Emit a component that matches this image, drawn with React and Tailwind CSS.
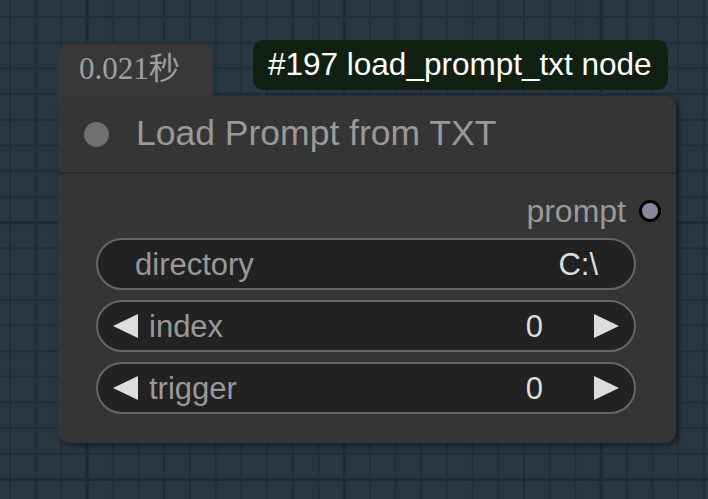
import React from 'react';

const STEP = 25.7;

// canvas grid behind the node
const Grid = () => {
  const lines = [];
  for (let k = -1; k < 30; k++) {
    const x = 10 + STEP * k;
    const major = (k - 3) % 10 === 0;
    lines.push(
      <rect key={'v' + k} x={x - (major ? 1.5 : 1)} y={0} width={major ? 3 : 2} height={499} fill={major ? '#1f2a32' : '#222e37'} />
    );
  }
  for (let k = -1; k < 22; k++) {
    const y = 17 + STEP * k;
    const major = (k - 8) % 10 === 0;
    lines.push(
      <rect key={'h' + k} x={0} y={y - (major ? 1.5 : 1)} width={708} height={major ? 3 : 2} fill={major ? '#1f2a32' : '#222e37'} />
    );
  }
  return (
    <svg className="absolute inset-0" width="708" height="499">
      <rect width="708" height="499" fill="#293741" />
      {lines}
    </svg>
  );
};

const ArrowLeft = () => (
  <svg width="25" height="24" viewBox="0 0 25 24" className="shrink-0">
    <polygon points="25,0 25,24 0,12" fill="#dddddd" />
  </svg>
);

const ArrowRight = () => (
  <svg width="25" height="24" viewBox="0 0 25 24" className="shrink-0">
    <polygon points="0,0 0,24 25,12" fill="#dddddd" />
  </svg>
);

const NumberWidget = ({ label, value }) => (
  <div className="h-[52px] w-[540px] rounded-full border-2 border-[#666666] bg-[#222222] flex items-center pl-[15px] pr-[15px]">
    <ArrowLeft />
    <span className="ml-[11px] text-[31px] text-[#999999] leading-none">{label}</span>
    <span className="ml-auto text-[31px] text-[#dddddd] leading-none">{value}</span>
    <span className="ml-[51px]"><ArrowRight /></span>
  </div>
);

export default function App() {
  return (
    <div className="relative w-[708px] h-[499px] overflow-hidden" style={{ fontFamily: '"Liberation Sans", Arial, sans-serif' }}>
      <Grid />

      {/* execution time badge */}
      <div className="absolute left-[58px] top-[44px] w-[154px] h-[60px] rounded-t-[10px] bg-[#383838] pl-[21px] pt-[9px]">
        <span className="text-[31px] text-[#a0a0a0] leading-none" style={{ fontFamily: '"Liberation Serif", "Noto Sans CJK SC", serif' }}>0.021秒</span>
      </div>

      {/* node id badge */}
      <div className="absolute left-[253px] top-[40px] w-[415px] h-[50px] rounded-[10px] bg-[#102112] flex items-center pl-[15px]">
        <span className="text-[31.5px] text-white leading-none whitespace-nowrap">#197 load_prompt_txt node</span>
      </div>

      {/* node */}
      <div className="absolute left-[58px] top-[96px] w-[618px] h-[347px] rounded-[12px] bg-[#353535] shadow-[3px_3px_6px_rgba(0,0,0,0.45)] flex flex-col">
        <div className="h-[78px] flex items-center border-b-2 border-[#2a2a2a] shrink-0">
          <div className="ml-[26px] w-[25px] h-[25px] rounded-full bg-[#707070]" />
          <span className="ml-[27px] text-[35.5px] text-[#999999] leading-none">Load Prompt from TXT</span>
        </div>

        <div className="flex flex-col pt-[11px]">
          <div className="h-[51px] flex items-center justify-end pr-[15px]">
            <span className="text-[32px] text-[#999999] leading-none">prompt</span>
            <div className="ml-[13px] w-[22px] h-[22px] rounded-full bg-[#8a889e] border-[3px] border-black" />
          </div>

          <div className="mt-[2px] ml-[38px] flex flex-col gap-[10px]">
            <div className="h-[52px] w-[540px] rounded-full border-2 border-[#666666] bg-[#222222] flex items-center pl-[37px] pr-[36px]">
              <span className="text-[31px] text-[#999999] leading-none">directory</span>
              <span className="ml-auto text-[31px] text-[#dddddd] leading-none">C:\</span>
            </div>
            <NumberWidget label="index" value="0" />
            <NumberWidget label="trigger" value="0" />
          </div>
        </div>
      </div>
    </div>
  );
}
